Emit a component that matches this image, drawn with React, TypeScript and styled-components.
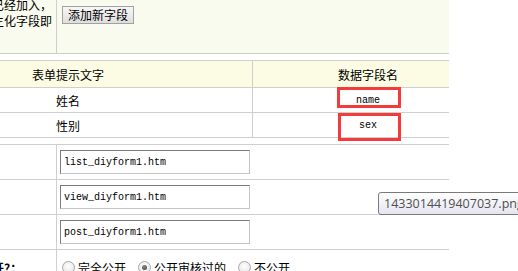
import React from "react";
import styled, { createGlobalStyle } from "styled-components";

const GlobalStyle = createGlobalStyle`
  html, body {
    margin: 0;
    padding: 0;
    background: #fff;
    overflow: hidden;
  }
  body {
    font-family: "Noto Sans CJK SC", "Liberation Sans", sans-serif;
    font-size: 12px;
    color: #000;
  }
`;

const Page = styled.div`
  position: relative;
  width: 518px;
  height: 271px;
  overflow: hidden;
`;

const Sheet = styled.div`
  width: 449px;
`;

const TopBar = styled.div`
  display: flex;
  box-sizing: border-box;
  height: 54px;
  background: #f9fbee;
  border-bottom: 1px solid #cfcfcf;
`;

const NoteCell = styled.div`
  box-sizing: border-box;
  width: 57px;
  padding-right: 4px;
  border-right: 1px solid #cfcfcf;
  overflow: hidden;
  white-space: nowrap;
  text-align: right;
  line-height: 16px;

  p {
    margin: -3px 0 0 -20px;
  }
`;

const ActionCell = styled.div`
  flex: 1;
  padding: 6px 0 0 5px;
`;

const Button = styled.button`
  box-sizing: border-box;
  height: 18px;
  padding: 0 5px;
  border: 1px solid #a2a2a2;
  border-radius: 0;
  background: linear-gradient(#f7f7f7, #dedede);
  font-family: inherit;
  font-size: 12px;
  line-height: 16px;
  color: #000;
`;

const FieldTable = styled.div`
  margin-top: 6px;
  border-top: 1px solid #cfcfcf;
`;

const FieldRow = styled.div<{ $head?: boolean }>`
  display: grid;
  grid-template-columns: 253px 1fr;
  box-sizing: border-box;
  height: ${(p) => (p.$head ? 27 : 25)}px;
  background: ${(p) => (p.$head ? "#fbfce3" : "#fff")};
  border-bottom: 1px solid #cfcfcf;
`;

const LabelCell = styled.div`
  display: flex;
  align-items: center;
  justify-content: center;
  padding-right: 116px;
  border-right: 1px solid #cfcfcf;
`;

const KeyCell = styled.div<{ $mono?: boolean }>`
  display: flex;
  align-items: center;
  justify-content: center;
  padding-left: 34px;
  font-family: ${(p) =>
    p.$mono ? `"Liberation Mono", monospace` : "inherit"};
  font-size: ${(p) => (p.$mono ? 10 : 12)}px;
`;

const OptionTable = styled.div`
  margin-top: 6px;
  border-top: 1px solid #cfcfcf;
`;

const OptionRow = styled.div<{ $last?: boolean }>`
  display: grid;
  grid-template-columns: 57px 1fr;
  box-sizing: border-box;
  height: 35px;
  border-bottom: ${(p) => (p.$last ? "none" : "1px solid #cfcfcf")};
`;

const OptionLabel = styled.div`
  display: flex;
  align-items: center;
  border-right: 1px solid #cfcfcf;
  overflow: hidden;
  white-space: nowrap;

  span {
    margin-left: -44px;
    font-weight: bold;
  }
`;

const OptionValue = styled.div`
  display: flex;
  align-items: center;
  padding-left: 3px;
`;

const TextInput = styled.input`
  box-sizing: border-box;
  width: 190px;
  height: 24px;
  margin: 0;
  padding: 0 3px;
  border: 1px solid;
  border-color: #7b7b7b #c4c4c4 #c4c4c4 #7b7b7b;
  background: #fff;
  font-family: "Liberation Mono", monospace;
  font-size: 10px;
  color: #000;
  outline: none;
`;

const RadioGroup = styled.div`
  display: flex;
  align-items: center;
  padding-left: 5px;
`;

const RadioOption = styled.label`
  display: inline-flex;
  align-items: center;
  gap: 3px;
  margin-right: 12px;
`;

const Radio = styled.span<{ $checked?: boolean }>`
  position: relative;
  box-sizing: border-box;
  width: 13px;
  height: 13px;
  border: 1px solid #a8a8a8;
  border-radius: 50%;
  background: radial-gradient(circle at 50% 40%, #ffffff, #e1e1e1);

  &::after {
    content: "";
    display: ${(p) => (p.$checked ? "block" : "none")};
    position: absolute;
    left: 3px;
    top: 3px;
    width: 5px;
    height: 5px;
    border-radius: 50%;
    background: radial-gradient(circle at 40% 35%, #8a8a8a, #3c3c3c);
  }
`;

const Mark = styled.div<{ $x: number; $y: number; $w: number; $h: number }>`
  position: absolute;
  left: ${(p) => p.$x}px;
  top: ${(p) => p.$y}px;
  width: ${(p) => p.$w}px;
  height: ${(p) => p.$h}px;
  box-sizing: border-box;
  border: 3px solid #f43b3b;
`;

const Tooltip = styled.div`
  position: absolute;
  left: 378px;
  top: 192px;
  box-sizing: border-box;
  height: 23px;
  padding: 0 5px;
  border: 1px solid #7a7a7a;
  border-radius: 3px;
  background: linear-gradient(#ffffff, #e4e5f0);
  font-family: "Open Sans", "Liberation Sans", sans-serif;
  font-size: 12.5px;
  line-height: 21px;
  color: #4f4f4f;
  white-space: nowrap;
`;

const fields = [
  { label: "姓名", key: "name" },
  { label: "性别", key: "sex" },
];

const templates = ["list_diyform1.htm", "view_diyform1.htm", "post_diyform1.htm"];

const options = [
  { label: "完全公开", checked: false },
  { label: "公开审核过的", checked: true },
  { label: "不公开", checked: false },
];

export default function App() {
  return (
    <>
      <GlobalStyle />
      <Page>
        <Sheet>
          <TopBar>
            <NoteCell>
              <p>
                已经加入，
                <br />
                主化字段即
              </p>
            </NoteCell>
            <ActionCell>
              <Button type="button">添加新字段</Button>
            </ActionCell>
          </TopBar>

          <FieldTable>
            <FieldRow $head>
              <LabelCell>表单提示文字</LabelCell>
              <KeyCell>数据字段名</KeyCell>
            </FieldRow>
            {fields.map((f) => (
              <FieldRow key={f.key}>
                <LabelCell>{f.label}</LabelCell>
                <KeyCell $mono>{f.key}</KeyCell>
              </FieldRow>
            ))}
          </FieldTable>

          <OptionTable>
            {templates.map((t) => (
              <OptionRow key={t}>
                <OptionLabel />
                <OptionValue>
                  <TextInput defaultValue={t} />
                </OptionValue>
              </OptionRow>
            ))}
            <OptionRow $last>
              <OptionLabel>
                <span>是否公开?：</span>
              </OptionLabel>
              <RadioGroup>
                {options.map((o) => (
                  <RadioOption key={o.label}>
                    <Radio $checked={o.checked} />
                    {o.label}
                  </RadioOption>
                ))}
              </RadioGroup>
            </OptionRow>
          </OptionTable>
        </Sheet>

        <Mark $x={337} $y={87} $w={64} $h={21} />
        <Mark $x={338} $y={113} $w={63} $h={28} />
        <Tooltip>1433014419407037.png</Tooltip>
      </Page>
    </>
  );
}
